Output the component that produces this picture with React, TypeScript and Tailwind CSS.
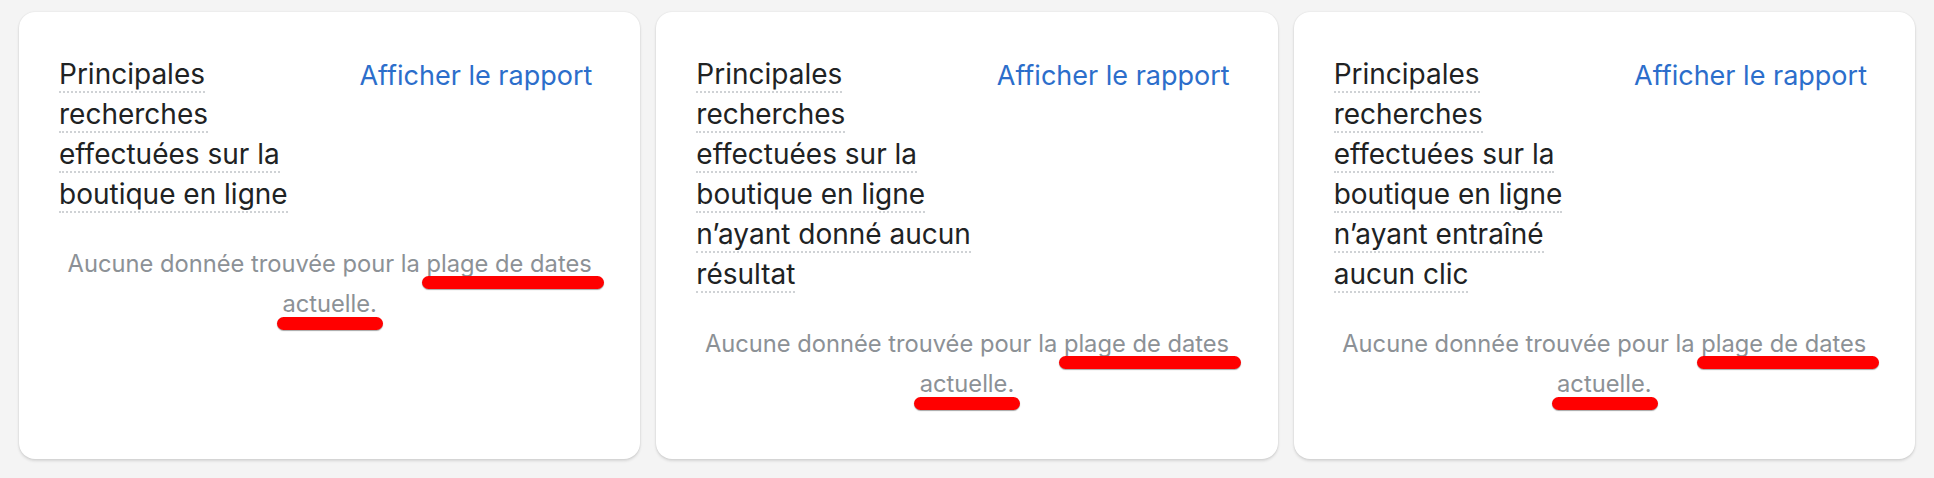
const cards = [
  ["Principales", "recherches", "effectuées sur la", "boutique en ligne"],
  ["Principales", "recherches", "effectuées sur la", "boutique en ligne", "n’ayant donné aucun", "résultat"],
  ["Principales", "recherches", "effectuées sur la", "boutique en ligne", "n’ayant entraîné", "aucun clic"],
];

function ReportCard({ lines }: { lines: string[] }) {
  return (
    <div className="flex-1 h-[447px] bg-white rounded-[16px] shadow-[0_0_2px_rgba(0,0,0,0.1),0_2px_3px_rgba(0,0,0,0.12)] pt-[42px] px-[40px]">
      <div className="flex items-start justify-between">
        <div className="text-[28px] leading-[40px] text-[#202223]">
          {lines.map((line) => (
            <div key={line}>
              <span className="border-b-2 border-dotted border-[#cfd2d5]">{line}</span>
            </div>
          ))}
        </div>
        <a className="text-[27px] leading-[40px] text-[#2c6ecb] mr-[8px] mt-[2px] whitespace-nowrap">Afficher le rapport</a>
      </div>
      <div className="relative mt-[30px] text-center text-[23.7px] leading-[40px] text-[#8c9196]">
        Aucune donnée trouvée pour la plage de dates actuelle.
        <div className="absolute left-[363px] top-[32px] w-[182px] h-[13px] rounded-full bg-[#ff0000] shadow-[0_1px_1px_rgba(0,0,0,0.35)]" />
        <div className="absolute left-[218px] top-[73px] w-[106px] h-[13px] rounded-full bg-[#ff0000] shadow-[0_1px_1px_rgba(0,0,0,0.35)]" />
      </div>
    </div>
  );
}

export default function App() {
  return (
    <div className="w-[1934px] h-[478px] bg-[#f4f4f4] px-[19px] pt-[12px] flex gap-4 font-['Inter',sans-serif]">
      {cards.map((lines, i) => (
        <ReportCard key={i} lines={lines} />
      ))}
    </div>
  );
}
